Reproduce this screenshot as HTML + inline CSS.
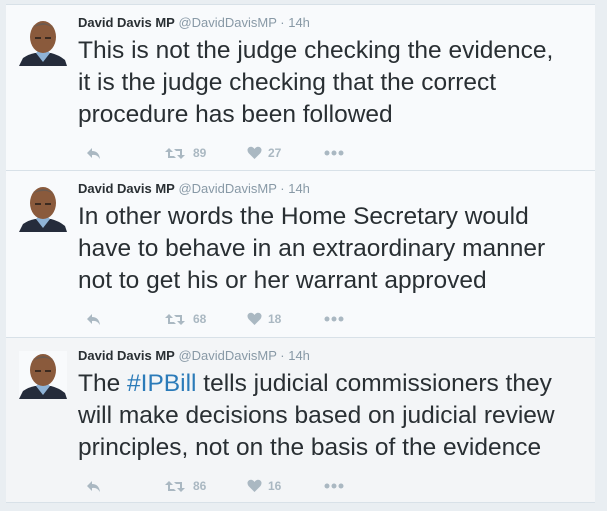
<!DOCTYPE html>
<html><head><meta charset="utf-8"><style>
body{margin:0;width:607px;height:511px;background:#e9eef2;overflow:hidden;font-family:"Liberation Sans",Arial,sans-serif}
.panel{position:absolute;left:6px;top:4px;width:589px;height:498px;background:#f5f8fa;border:1px solid #d8e1e8;box-sizing:border-box}
.tw{position:absolute;left:6px;width:589px;background:#f8fafc;border-top:1px solid #d8e1e8;box-sizing:border-box}
.tw.h{background:#f3f5f7;border-bottom:1px solid #d8e1e8}
.av{position:absolute;left:13px;top:13px;width:48px;height:48px}
.nm{position:absolute;left:72px;top:10px;font-size:13px;color:#292f33;white-space:nowrap}
.nm b{font-weight:bold}.nm span{color:#8899a6}
.tx{position:absolute;left:72px;top:30px;font-size:24.5px;line-height:32px;color:#292f33;white-space:nowrap}
.tx a{color:#2b7bb9}
.ac{position:absolute;top:139px;left:72px;height:16px;width:300px;font-size:12px;font-weight:bold;color:#aab8c2}
.ac>*{position:absolute;top:0}
.ac span{top:2px}
</style></head><body>
<div class="panel"></div>
<div id="c"></div>
<script>
const tw=[
[4,166,["This is not the judge checking the evidence,","it is the judge checking that the correct","procedure has been followed"],"89","27",false],
[170,167,["In other words the Home Secretary would","have to behave in an extraordinary manner","not to get his or her warrant approved"],"68","18",false],
[337,166,['The <a>#IPBill</a> tells judicial commissioners they',"will make decisions based on judicial review","principles, not on the basis of the evidence"],"86","16",true]];
let h='';
const av=`<svg class="av" viewBox="0 0 48 48"><rect width="48" height="48" fill="#f8fafc"/><path d="M0 48 L4 40 Q10 36 16 35 L32 35 Q40 37 46 42 L48 48Z" fill="#252c3b"/><path d="M17 35 L24 44 L31 35 L28 32 L20 32Z" fill="#8fb3d6"/><ellipse cx="24" cy="19" rx="13" ry="16" fill="#8a5a3c"/><path d="M12 12 Q24 -2 36 12 Q30 6 24 7 Q16 7 12 12Z" fill="#6b5a50"/><path d="M16 20 L22 20 M26 20 L32 20" stroke="#3b2a20" stroke-width="2"/></svg>`;
for(const[t,ht,l,r,k,hv] of tw){
h+=`<div class="tw${hv?' h':''}" style="top:${t}px;height:${ht}px">${av}
<div class="nm"><b>David Davis MP</b> <span>@DavidDavisMP · 14h</span></div>
<div class="tx">${l.join('<br>')}</div>
<div class="ac">
<svg style="left:8px;top:3px" width="16" height="13" viewBox="0 0 16 13"><path d="M6 1 L1 6 L6 11 L6 8 Q11 7 14 12 Q13 4 6 4Z" fill="#aab8c2"/></svg>
<svg style="left:87px;top:3px" width="20" height="13" viewBox="0 0 20 13"><path d="M4 1 L0 5 L3 5 L3 11 L11 11 L9 9 L5 9 L5 5 L8 5Z M16 12 L20 8 L17 8 L17 2 L9 2 L11 4 L15 4 L15 8 L12 8Z" fill="#aab8c2"/></svg>
<span style="left:115px">${r}</span>
<svg style="left:169px;top:2px" width="15" height="14" viewBox="0 0 15 14"><path d="M7.5 13 L1.5 7 Q-1 3 2.5 1 Q5.5 0 7.5 3 Q9.5 0 12.5 1 Q16 3 13.5 7Z" fill="#aab8c2"/></svg>
<span style="left:190px">${k}</span>
<svg style="left:246px;top:6px" width="20" height="6"><circle cx="3" cy="3" r="2.5" fill="#aab8c2"/><circle cx="10" cy="3" r="2.5" fill="#aab8c2"/><circle cx="17" cy="3" r="2.5" fill="#aab8c2"/></svg>
</div></div>`}
document.getElementById('c').innerHTML=h;
</script>
</body></html>
